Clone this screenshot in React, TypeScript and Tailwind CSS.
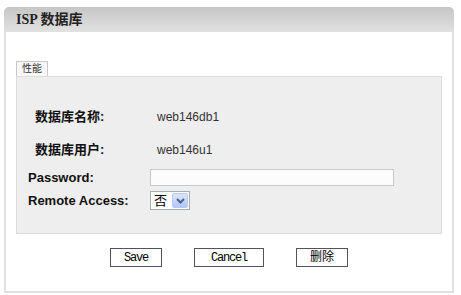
import React from "react";

export default function App() {
  const cjk = { fontFamily: '"Liberation Sans", "Noto Sans CJK SC", sans-serif' };
  return (
    <div className="w-[461px] h-[295px] bg-white overflow-hidden" style={cjk}>
      <div className="ml-[4px] pt-[7px] w-[450px]">
        <div className="h-[25px] rounded-t-[5px] bg-gradient-to-b from-[#c6c6c6] to-[#e1e1e1] flex items-center pl-[12px]">
          <span
            className="text-[14px] font-bold text-[#222] leading-none"
            style={{ fontFamily: '"Liberation Serif", "Noto Sans CJK SC", serif' }}
          >
            ISP 数据库
          </span>
        </div>
        <div className="h-[261px] border-2 border-t-0 border-[#e0e0e0] px-[10px] pt-[29px]">
          <div className="w-[32px] h-[15px] border border-b-0 border-[#c8c8c8] bg-[#f7f7f7] flex items-center justify-center">
            <span className="text-[10px] text-[#333] leading-none">性能</span>
          </div>
          <div className="h-[158px] border border-[#dcdcdc] bg-[#eeeeee] pl-[11px] pt-[27px]">
            <div className="h-[26px] flex items-center">
              <span className="w-[129px] pl-[7px] text-[13px] font-bold text-[#111]">数据库名称:</span>
              <span className="text-[12px] text-[#333]">web146db1</span>
            </div>
            <div className="mt-[7px] h-[26px] flex items-center">
              <span className="w-[129px] pl-[7px] text-[13px] font-bold text-[#111]">数据库用户:</span>
              <span className="text-[12px] text-[#333]">web146u1</span>
            </div>
            <div className="mt-[6px] h-[17px] flex items-center">
              <span className="w-[122px] text-[13px] font-bold text-[#111]">Password:</span>
              <div className="w-[244px] h-[17px] border border-[#c8c8c8] bg-[#fcfcfc]" />
            </div>
            <div className="mt-[5px] h-[19px] flex items-center">
              <span className="w-[122px] text-[13px] font-bold text-[#111]">Remote Access:</span>
              <div className="w-[40px] h-[19px] border border-[#a5acb2] bg-white flex items-center pl-[3px] pr-[1px]">
                <span className="text-[13px] text-black leading-none flex-1">否</span>
                <div className="w-[16px] h-[15px] rounded-[2px] border border-[#b8c9f0] bg-gradient-to-b from-[#dbe5fd] to-[#b3c7f5] flex items-center justify-center">
                  <svg width="9" height="6" viewBox="0 0 9 6">
                    <path d="M1 1 L4.5 4.5 L8 1" stroke="#4d6185" strokeWidth="2" fill="none" />
                  </svg>
                </div>
              </div>
            </div>
          </div>
          <div
            className="mt-[14px] flex justify-center gap-[32px]"
            style={{ fontFamily: '"Liberation Mono", "Noto Sans CJK SC", monospace' }}
          >
            <div className="w-[52px] h-[19px] border border-[#555066] bg-white flex items-center justify-center text-[12px] tracking-[-1.2px] text-black">
              Save
            </div>
            <div className="w-[70px] h-[19px] border border-[#555066] bg-white flex items-center justify-center text-[12px] tracking-[-1.2px] text-black">
              Cancel
            </div>
            <div className="w-[52px] h-[19px] border border-[#555066] bg-white flex items-center justify-center text-[12px] text-black">
              删除
            </div>
          </div>
        </div>
      </div>
    </div>
  );
}
